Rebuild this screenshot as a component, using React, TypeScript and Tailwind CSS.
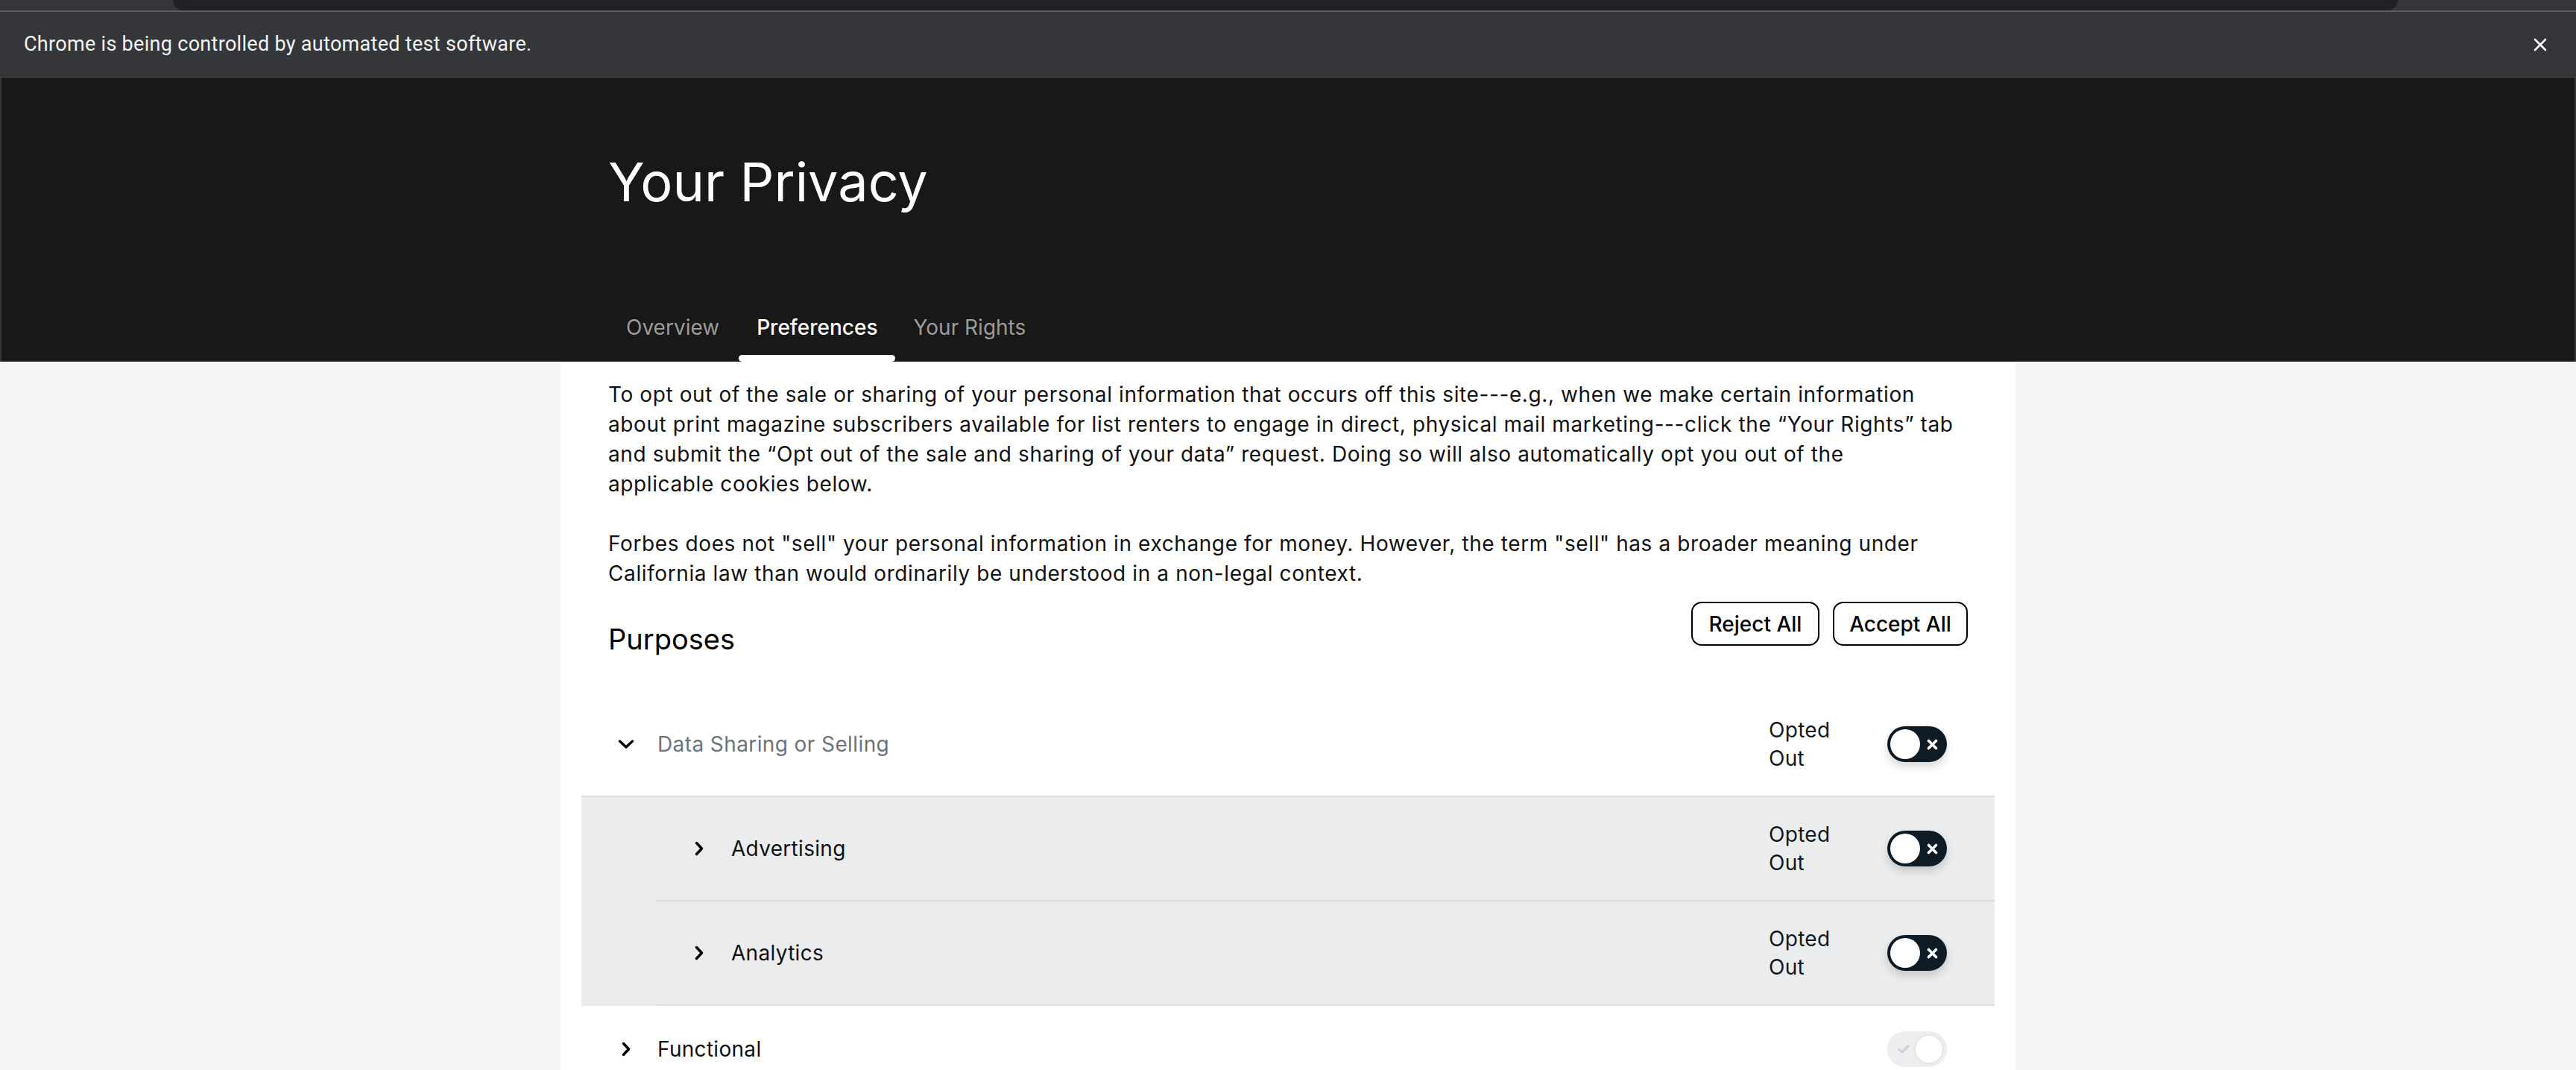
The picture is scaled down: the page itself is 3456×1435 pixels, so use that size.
import React from "react";

function ChevronDown() {
  return (
    <svg width="24" height="24" viewBox="0 0 24 24" fill="none" stroke="currentColor" strokeWidth="3.5" strokeLinecap="round" strokeLinejoin="round">
      <path d="M3.5 8 L12 16 L20.5 8" />
    </svg>
  );
}

function ChevronRight() {
  return (
    <svg width="24" height="24" viewBox="0 0 24 24" fill="none" stroke="currentColor" strokeWidth="3.5" strokeLinecap="round" strokeLinejoin="round">
      <path d="M8.5 4.5 L15.5 12 L8.5 19.5" />
    </svg>
  );
}

function ToggleOff() {
  return (
    <div className="flex h-[48px] w-[80px] items-center rounded-full bg-[#0f1b24] p-[4px] shadow-[0_6px_12px_rgba(0,0,0,0.16)]">
      <div className="h-[40px] w-[40px] rounded-full bg-white" />
      <svg className="ml-[9px]" width="15" height="15" viewBox="0 0 15 15" fill="none" stroke="white" strokeWidth="3.6" strokeLinecap="round">
        <path d="M2.5 2.5 L12.5 12.5 M12.5 2.5 L2.5 12.5" />
      </svg>
    </div>
  );
}

function ToggleOnDisabled() {
  return (
    <div className="flex h-[48px] w-[80px] items-center rounded-full bg-[#eceef0] p-[4px]">
      <svg className="ml-[10px]" width="16" height="14" viewBox="0 0 16 14" fill="none" stroke="#cfd3d7" strokeWidth="3.2" strokeLinecap="round" strokeLinejoin="round">
        <path d="M2 7.5 L6 11 L14 3" />
      </svg>
      <div className="ml-auto h-[40px] w-[40px] rounded-full border-2 border-[#e4e6e9] bg-white" />
    </div>
  );
}

function Status() {
  return (
    <div className="ml-auto flex items-center pr-[64px]">
      <div className="w-[110px] text-[28px] leading-[38px] tracking-[0.3px] text-[#0e1a22]">Opted Out</div>
      <div className="ml-[49px]">
        <ToggleOff />
      </div>
    </div>
  );
}

export default function App() {
  return (
    <div className="h-[1435px] w-full overflow-hidden bg-[#f5f5f5] font-['Inter',sans-serif]">
      {/* browser chrome strip */}
      <div className="flex h-[14px] bg-[#35363a]">
        <div className="w-[232px]" />
        <div className="flex-1 rounded-b-[14px] bg-[#202124]" />
        <div className="w-[239px]" />
      </div>
      <div className="h-[2px] bg-[#5d5e61]" />
      <div className="flex h-[88px] items-center justify-between border-b border-[#4a4b4e] bg-[#35363a] pl-[32px] pr-[39px] font-['Roboto',sans-serif]">
        <span className="text-[27px] tracking-[0.3px] text-[#f1f3f4]">Chrome is being controlled by automated test software.</span>
        <svg width="18" height="18" viewBox="0 0 18 18" fill="none" stroke="white" strokeWidth="2.6" strokeLinecap="round">
          <path d="M2 2 L16 16 M16 2 L2 16" />
        </svg>
      </div>

      {/* dark header */}
      <header className="h-[381px] border-x-2 border-[#333335] bg-[#181818]">
        <div className="mx-auto flex h-full w-[1952px] flex-col px-[64px] pt-[104px]">
          <h1 className="text-[72px] font-normal leading-none text-white">Your Privacy</h1>
          <nav className="mt-auto flex">
            <div className="flex flex-col">
              <span className="px-[24px] text-[28px] leading-[40px] text-[#9b9b9b]">Overview</span>
              <div className="mt-[17px] h-[9px]" />
            </div>
            <div className="ml-[2px] flex flex-col">
              <span className="px-[24px] text-[28px] font-medium leading-[40px] text-white">Preferences</span>
              <div className="mt-[17px] h-[9px] rounded-full bg-white" />
            </div>
            <div className="flex flex-col">
              <span className="px-[24px] text-[28px] leading-[40px] text-[#9b9b9b]">Your Rights</span>
              <div className="mt-[17px] h-[9px]" />
            </div>
          </nav>
        </div>
      </header>

      {/* white panel */}
      <main className="mx-auto w-[1952px] bg-white pb-[40px]">
        <div className="px-[64px] pt-[24px]">
          <p className="whitespace-nowrap text-[28px] leading-[40px] tracking-[0.6px] text-[#111111]">
            To opt out of the sale or sharing of your personal information that occurs off this site---e.g., when we make certain information
            <br />
            about print magazine subscribers available for list renters to engage in direct, physical mail marketing---click the “Your Rights” tab
            <br />
            and submit the “Opt out of the sale and sharing of your data” request. Doing so will also automatically opt you out of the
            <br />
            applicable cookies below.
            <br />
            <br />
            Forbes does not "sell" your personal information in exchange for money. However, the term "sell" has a broader meaning under
            <br />
            California law than would ordinarily be understood in a non-legal context.
          </p>

          <div className="mt-[18px] flex items-start justify-between">
            <h2 className="mt-[31px] text-[38px] font-normal leading-none text-black">Purposes</h2>
            <div className="flex gap-[18px]">
              <button className="flex h-[59px] w-[172px] items-center justify-center rounded-[14px] border-2 border-black bg-white text-[28px] font-medium text-black">
                Reject All
              </button>
              <button className="flex h-[59px] w-[181px] items-center justify-center rounded-[14px] border-2 border-black bg-white text-[28px] font-medium text-black">
                Accept All
              </button>
            </div>
          </div>
        </div>

        {/* accordion */}
        <div className="mx-[28px] mt-[53px]">
          <div className="flex h-[140px] items-center border-b-2 border-[#dcdde0] pl-[48px]">
            <span className="text-black">
              <ChevronDown />
            </span>
            <span className="ml-[30px] text-[28px] tracking-[0.4px] text-[#6d737a]">Data Sharing or Selling</span>
            <Status />
          </div>

          <div className="bg-[#ebecee]">
            <div className="ml-[100px] flex h-[140px] items-center border-b-2 border-[#dcdde0] pl-[46px]">
              <span className="text-black">
                <ChevronRight />
              </span>
              <span className="ml-[31px] text-[28px] tracking-[0.3px] text-[#111111]">Advertising</span>
              <Status />
            </div>
            <div className="ml-[100px] flex h-[140px] items-center border-b-2 border-[#dcdde0] pl-[46px]">
              <span className="text-black">
                <ChevronRight />
              </span>
              <span className="ml-[31px] text-[28px] tracking-[0.3px] text-[#111111]">Analytics</span>
              <Status />
            </div>
          </div>

          <div className="flex h-[116px] items-center pl-[48px]">
            <span className="text-black">
              <ChevronRight />
            </span>
            <span className="ml-[30px] text-[28px] tracking-[0.3px] text-[#111111]">Functional</span>
            <div className="ml-auto flex items-center pr-[64px]">
              <ToggleOnDisabled />
            </div>
          </div>
        </div>
      </main>
    </div>
  );
}
